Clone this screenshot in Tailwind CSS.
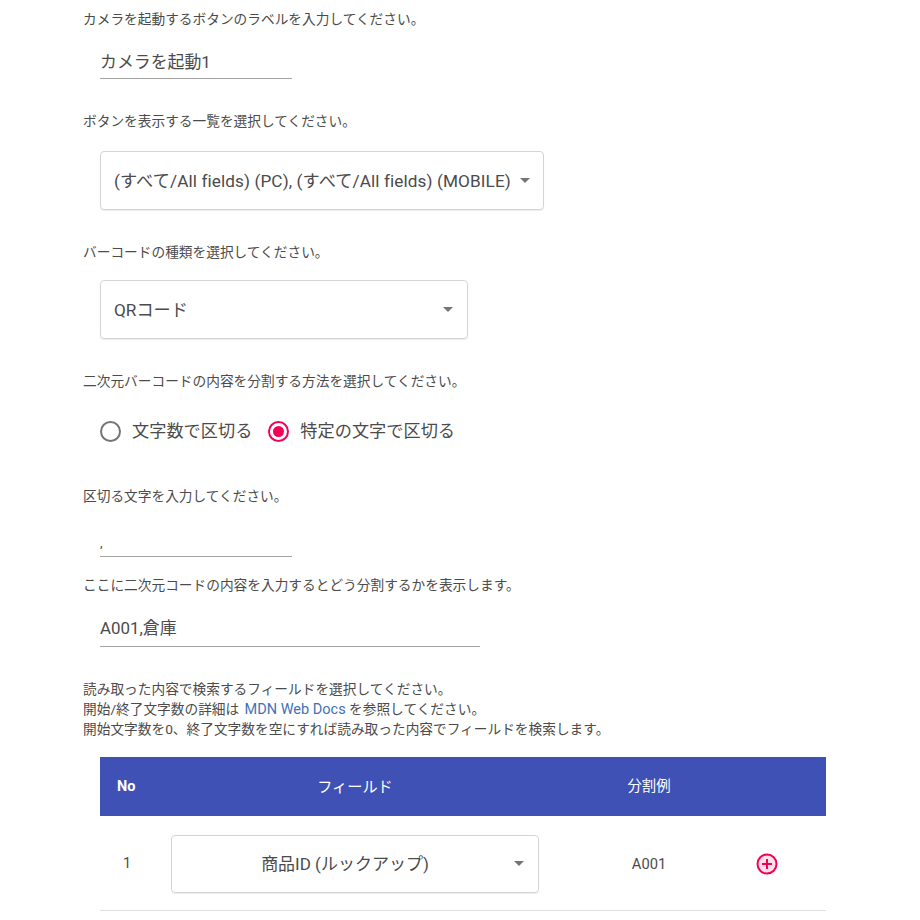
<!DOCTYPE html>
<html lang="ja"><head><meta charset="utf-8">
<script src="https://cdn.jsdelivr.net/npm/@tailwindcss/browser@4"></script></head>
<body class="bg-white overflow-hidden font-['Roboto','Noto_Sans_CJK_JP',sans-serif] text-[#4b4b4b]">
<div class="w-[920px] h-[920px] overflow-hidden pl-[83px] text-[13.7px] leading-[20px]">
  <p class="mt-[9px]">カメラを起動するボタンのラベルを入力してください。</p>
  <div class="ml-[17px] mt-[17px] w-[192px] h-[33px] border-b border-[#a3a3a3] text-[16.9px] leading-[32px]">カメラを起動1</div>
  <p class="mt-[32px]">ボタンを表示する一覧を選択してください。</p>
  <div class="ml-[17px] mt-[20px] w-[444px] h-[59px] border border-[#d4d4d4] rounded-[4px] shadow-[0_1px_1px_rgba(0,0,0,0.08)] flex items-center justify-between pl-[13px] pr-[13px] text-[17.2px]">
    <span class="whitespace-nowrap tracking-[0.1px]">(すべて/All fields) (PC), (すべて/All fields) (MOBILE)</span>
    <span class="w-0 h-0 border-x-[5px] border-x-transparent border-t-[5px] border-t-[#757575]"></span>
  </div>
  <p class="mt-[32px]">バーコードの種類を選択してください。</p>
  <div class="ml-[17px] mt-[18px] w-[368px] h-[59px] border border-[#d4d4d4] rounded-[4px] shadow-[0_1px_1px_rgba(0,0,0,0.08)] flex items-center justify-between pl-[13px] pr-[14px] text-[17.2px]">
    <span>QRコード</span>
    <span class="w-0 h-0 border-x-[5px] border-x-transparent border-t-[5px] border-t-[#757575]"></span>
  </div>
  <p class="mt-[32px]">二次元バーコードの内容を分割する方法を選択してください。</p>
  <div class="ml-[17px] mt-[25px] h-[30px] flex items-center text-[17.2px]">
    <span class="w-[21px] h-[21px] rounded-full border-[2.5px] border-[#757575]"></span>
    <span class="ml-[11px]">文字数で区切る</span>
    <span class="ml-[16px] w-[21px] h-[21px] rounded-full border-[2.5px] border-[#f50057] flex items-center justify-center"><span class="w-[11px] h-[11px] rounded-full bg-[#f50057]"></span></span>
    <span class="ml-[11px]">特定の文字で区切る</span>
  </div>
  <p class="mt-[40px]">区切る文字を入力してください。</p>
  <div class="ml-[17px] mt-[24px] w-[192px] h-[27px] border-b border-[#a3a3a3] text-[13px] leading-[26px]">,</div>
  <p class="mt-[18px]">ここに二次元コードの内容を入力するとどう分割するかを表示します。</p>
  <div class="ml-[17px] mt-[14px] w-[380px] h-[38px] border-b border-[#a3a3a3] text-[16.9px] leading-[39px]">A001,倉庫</div>
  <div class="mt-[32px]">
    <p class="h-[20px]">読み取った内容で検索するフィールドを選択してください。</p>
    <p class="h-[20px]">開始/終了文字数の詳細は <a class="text-[#3f72b8] text-[14.5px] leading-none ml-[2px]">MDN Web Docs</a> を参照してください。</p>
    <p class="h-[20px]">開始文字数を0、終了文字数を空にすれば読み取った内容でフィールドを検索します。</p>
  </div>
  <div class="ml-[17px] mt-[18px] w-[726px]">
    <div class="h-[59px] bg-[#3f51b5] text-white flex items-center">
      <span class="w-[71px] pl-[17px] font-bold text-[14.5px]">No</span>
      <span class="w-[368px] text-center text-[15.2px]">フィールド</span>
      <span class="w-[220px] text-center text-[14.4px]">分割例</span>
    </div>
    <div class="h-[95px] pt-[1px] border-b border-[#e0e0e0] flex items-center">
      <span class="w-[71px] pl-[23px] text-[14.5px]">1</span>
      <div class="w-[368px] h-[58px] border border-[#d4d4d4] rounded-[4px] shadow-[0_1px_1px_rgba(0,0,0,0.08)] flex items-center pr-[14px] text-[17px]">
        <span class="flex-1 text-center pl-[4px]">商品ID (ルックアップ)</span>
        <span class="w-0 h-0 border-x-[5px] border-x-transparent border-t-[5px] border-t-[#757575]"></span>
      </div>
      <span class="w-[220px] text-center text-[14.7px]">A001</span>
      <svg class="w-[22px] h-[22px] -ml-[3px]" viewBox="0 0 22 22" fill="none" stroke="#f50057" stroke-width="2"><circle cx="11" cy="11" r="9.5" fill="#f50057" fill-opacity="0.12"/><path d="M11 6v10M6 11h10"/></svg>
    </div>
  </div>
</div>
</body></html>
